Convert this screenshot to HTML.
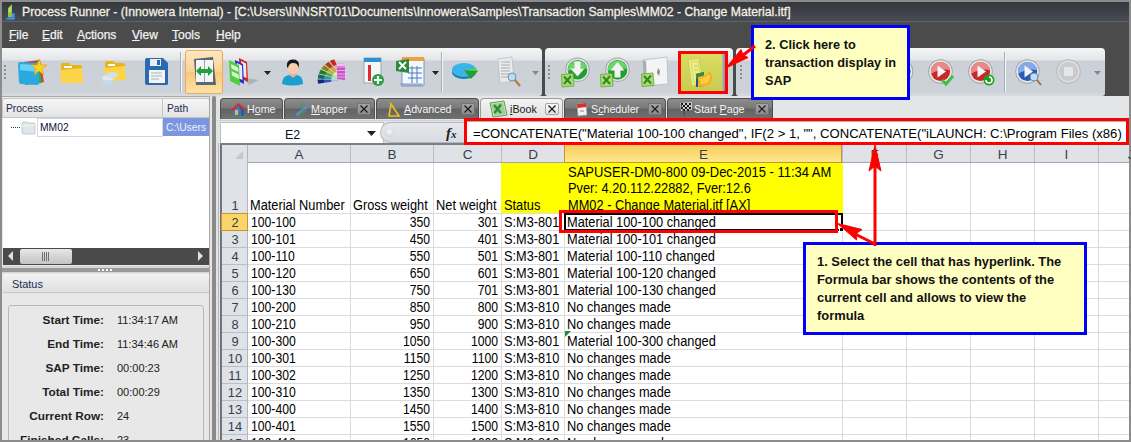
<!DOCTYPE html>
<html><head><meta charset="utf-8">
<style>
*{box-sizing:border-box;margin:0;padding:0}
html,body{width:1131px;height:442px;overflow:hidden;background:#8c8c8c;font-family:"Liberation Sans",sans-serif}
.a{position:absolute}
.t{position:absolute;white-space:pre;line-height:1}
svg{position:absolute;overflow:visible}
</style></head><body>

<div class="a" style="left:0px;top:0px;width:1131px;height:442px;background:#8c8c8c"></div>
<div class="a" style="left:2px;top:2px;width:1127px;height:19px;background:linear-gradient(#34373c,#474b53)"></div>
<div class="a" style="left:2px;top:21px;width:1127px;height:1px;background:#5d626b"></div>
<div class="t" style="left:22px;top:6px;font-size:12.25px;color:#f4f0e0;-webkit-text-stroke:0.3px #f4f0e0">Process Runner - (Innowera Internal) - [C:\Users\INNSRT01\Documents\Innowera\Samples\Transaction Samples\MM02 - Change Material.itf]</div>
<svg style="left:0;top:0" width="20" height="22"><path d="M8 8 L12 4 L12 17 L8 18Z" fill="#8cc63e"/><path d="M8.5 9 L11.5 6 L11.5 11 L8.5 13Z" fill="#b8e070"/><path d="M5 20 L8 17 L12 17 L12 13 L15 13 L15 20Z" fill="#2a64b0"/><path d="M12 13.5 L14.5 13.5 L14.5 19.5 L6 19.5 L8 17.5 L12 17.5Z" fill="#4a8ad8"/></svg>
<div class="a" style="left:2px;top:22px;width:1127px;height:26px;background:#4b4b4b"></div>
<div class="t" style="left:9px;top:29px;font-size:12px;color:#f2f2f2;-webkit-text-stroke:0.25px #f2f2f2"><u>F</u>ile</div>
<div class="t" style="left:42px;top:29px;font-size:12px;color:#f2f2f2;-webkit-text-stroke:0.25px #f2f2f2"><u>E</u>dit</div>
<div class="t" style="left:77px;top:29px;font-size:12px;color:#f2f2f2;-webkit-text-stroke:0.25px #f2f2f2"><u>A</u>ctions</div>
<div class="t" style="left:132px;top:29px;font-size:12px;color:#f2f2f2;-webkit-text-stroke:0.25px #f2f2f2"><u>V</u>iew</div>
<div class="t" style="left:172px;top:29px;font-size:12px;color:#f2f2f2;-webkit-text-stroke:0.25px #f2f2f2"><u>T</u>ools</div>
<div class="t" style="left:216px;top:29px;font-size:12px;color:#f2f2f2;-webkit-text-stroke:0.25px #f2f2f2"><u>H</u>elp</div>
<div class="a" style="left:2px;top:48px;width:1127px;height:50px;background:#4b4b4b"></div>
<div class="a" style="left:2px;top:96px;width:1127px;height:3px;background:#dcdcdc"></div>
<div class="a" style="left:2px;top:48px;width:540px;height:48px;border-radius:0 4px 3px 0;background:linear-gradient(#f5f6f7 0,#e3e5e8 12px,#cbd1d7 13px,#cdd2d8 44px,#d6dadf 47px)"></div>
<div class="a" style="left:545px;top:48px;width:188px;height:48px;border-radius:4px 4px 3px 3px;background:linear-gradient(#f5f6f7 0,#e3e5e8 12px,#cbd1d7 13px,#cdd2d8 44px,#d6dadf 47px)"></div>
<div class="a" style="left:736px;top:48px;width:369px;height:48px;border-radius:4px 4px 3px 3px;background:linear-gradient(#f5f6f7 0,#e3e5e8 12px,#cbd1d7 13px,#cdd2d8 44px,#d6dadf 47px)"></div>
<div class="a" style="left:2px;top:99px;width:208px;height:341px;background:#e6e6e6"></div>
<div class="a" style="left:2px;top:96px;width:208px;height:2px;background:linear-gradient(#a8a8a8 50%,#ececec 50%)"></div>
<div class="a" style="left:2px;top:98px;width:208px;height:20px;background:linear-gradient(#f6f6f6,#e4e4e4);border:1px solid #c4c4c4;border-radius:3px 3px 0 0"></div>
<div class="t" style="left:6px;top:104px;font-size:10.3px;color:#1e2a50;">Process</div>
<div class="a" style="left:162px;top:99px;width:1px;height:19px;background:#c6c6c6"></div>
<div class="t" style="left:167px;top:104px;font-size:10.3px;color:#1e2a50;">Path</div>
<div class="a" style="left:3px;top:118px;width:206px;height:130px;background:#fff"></div>
<div class="a" style="left:37px;top:118px;width:126px;height:19px;border:1px solid #d2d8e6"></div>
<div class="t" style="left:40px;top:123px;font-size:10.3px;color:#101040;">MM02</div>
<div class="a" style="left:163px;top:118px;width:46px;height:18px;background:#7b96dc"></div>
<svg style="left:10px;top:121px" width="28" height="14"><path d="M1 6.5H10" stroke="#333" stroke-width="1" stroke-dasharray="1 1"/><path d="M12 2 Q12 1 13 1 L17 1 L18 2 L24 2 Q25 2 25 3 L25 12 Q25 13 24 13 L13 13 Q12 13 12 12Z" fill="#dfe6ea" stroke="#b8c2c8" stroke-width="0.8"/><path d="M12 5 L25 4" stroke="#f4f8fa" stroke-width="1"/></svg>
<div class="t" style="left:166px;top:123px;font-size:10.3px;color:#f0f4ff;">C:\Users</div>
<div class="a" style="left:3px;top:248px;width:206px;height:17px;background:#4a4a4a"></div>
<div class="a" style="left:20px;top:249px;width:52px;height:15px;border-radius:2px;background:linear-gradient(#e8e8e8,#d4d4d4 50%,#c4c4c4)"></div>
<div class="a" style="left:2px;top:266px;width:208px;height:7px;background:#d6d6d6"></div>
<div class="a" style="left:2px;top:268px;width:208px;height:4px;background:#9a9a9a"></div>
<svg style="left:7px;top:250px" width="8" height="12"><path d="M6 1 L1 6 L6 11Z" fill="#e0e0e0"/></svg>
<svg style="left:197px;top:250px" width="8" height="12"><path d="M1 1 L6 6 L1 11Z" fill="#e0e0e0"/></svg>
<svg style="left:42px;top:252px" width="8" height="9"><path d="M0.5 0V9M2.5 0V9M4.5 0V9M6.5 0V9" stroke="#555" stroke-width="0.8"/></svg>
<svg style="left:98px;top:268px" width="14" height="4"><path d="M0 2H14" stroke="#fff" stroke-width="2" stroke-dasharray="2 2"/></svg>
<div class="a" style="left:3px;top:274px;width:206px;height:19px;background:linear-gradient(#f2f2f2,#e0e0e0);border-bottom:1px solid #c8c8c8"></div>
<div class="t" style="left:12px;top:279px;font-size:10.9px;color:#1e2a50;">Status</div>
<div class="a" style="left:3px;top:294px;width:206px;height:146px;background:#e8e8e8"></div>
<div class="a" style="left:8px;top:305px;width:196px;height:140px;border:1px solid #b8b8b8;border-radius:3px"></div>
<div class="a" style="left:209px;top:96px;width:1px;height:344px;background:#a8a8a8"></div>
<div class="a" style="left:210px;top:96px;width:2px;height:344px;background:#e6e6e6"></div>
<div class="a" style="left:212px;top:96px;width:4px;height:344px;background:#8a8a8a;border-radius:2px 2px 0 0"></div>
<div class="a" style="left:216px;top:96px;width:3px;height:344px;background:#e2e2e2"></div>
<div class="a" style="left:218px;top:143px;width:1px;height:297px;background:#b8b8b8"></div>
<div class="a" style="left:219px;top:96px;width:910px;height:344px;background:#e4e5e7"></div>
<div class="a" style="left:222px;top:163px;width:907px;height:277px;background:#fff"></div>
<div class="a" style="left:222px;top:145px;width:907px;height:17px;background:#dfe3e8"></div>
<div class="a" style="left:222px;top:162px;width:907px;height:1px;background:#9ea7b2"></div>
<div class="a" style="left:222px;top:162px;width:25px;height:278px;background:#dfe3e8"></div>
<div class="a" style="left:247px;top:213px;width:882px;height:1px;background:#dadcdd"></div>
<div class="a" style="left:222px;top:213px;width:25px;height:1px;background:#b8bfc8"></div>
<div class="a" style="left:247px;top:230px;width:882px;height:1px;background:#dadcdd"></div>
<div class="a" style="left:222px;top:230px;width:25px;height:1px;background:#b8bfc8"></div>
<div class="a" style="left:247px;top:247px;width:882px;height:1px;background:#dadcdd"></div>
<div class="a" style="left:222px;top:247px;width:25px;height:1px;background:#b8bfc8"></div>
<div class="a" style="left:247px;top:264px;width:882px;height:1px;background:#dadcdd"></div>
<div class="a" style="left:222px;top:264px;width:25px;height:1px;background:#b8bfc8"></div>
<div class="a" style="left:247px;top:281px;width:882px;height:1px;background:#dadcdd"></div>
<div class="a" style="left:222px;top:281px;width:25px;height:1px;background:#b8bfc8"></div>
<div class="a" style="left:247px;top:298px;width:882px;height:1px;background:#dadcdd"></div>
<div class="a" style="left:222px;top:298px;width:25px;height:1px;background:#b8bfc8"></div>
<div class="a" style="left:247px;top:315px;width:882px;height:1px;background:#dadcdd"></div>
<div class="a" style="left:222px;top:315px;width:25px;height:1px;background:#b8bfc8"></div>
<div class="a" style="left:247px;top:332px;width:882px;height:1px;background:#dadcdd"></div>
<div class="a" style="left:222px;top:332px;width:25px;height:1px;background:#b8bfc8"></div>
<div class="a" style="left:247px;top:349px;width:882px;height:1px;background:#dadcdd"></div>
<div class="a" style="left:222px;top:349px;width:25px;height:1px;background:#b8bfc8"></div>
<div class="a" style="left:247px;top:366px;width:882px;height:1px;background:#dadcdd"></div>
<div class="a" style="left:222px;top:366px;width:25px;height:1px;background:#b8bfc8"></div>
<div class="a" style="left:247px;top:383px;width:882px;height:1px;background:#dadcdd"></div>
<div class="a" style="left:222px;top:383px;width:25px;height:1px;background:#b8bfc8"></div>
<div class="a" style="left:247px;top:400px;width:882px;height:1px;background:#dadcdd"></div>
<div class="a" style="left:222px;top:400px;width:25px;height:1px;background:#b8bfc8"></div>
<div class="a" style="left:247px;top:417px;width:882px;height:1px;background:#dadcdd"></div>
<div class="a" style="left:222px;top:417px;width:25px;height:1px;background:#b8bfc8"></div>
<div class="a" style="left:247px;top:434px;width:882px;height:1px;background:#dadcdd"></div>
<div class="a" style="left:222px;top:434px;width:25px;height:1px;background:#b8bfc8"></div>
<div class="a" style="left:350px;top:163px;width:1px;height:277px;background:#dadcdd"></div>
<div class="a" style="left:350px;top:145px;width:1px;height:17px;background:#b8bfc8"></div>
<div class="a" style="left:433px;top:163px;width:1px;height:277px;background:#dadcdd"></div>
<div class="a" style="left:433px;top:145px;width:1px;height:17px;background:#b8bfc8"></div>
<div class="a" style="left:501px;top:163px;width:1px;height:277px;background:#dadcdd"></div>
<div class="a" style="left:501px;top:145px;width:1px;height:17px;background:#b8bfc8"></div>
<div class="a" style="left:564px;top:163px;width:1px;height:277px;background:#dadcdd"></div>
<div class="a" style="left:564px;top:145px;width:1px;height:17px;background:#b8bfc8"></div>
<div class="a" style="left:842px;top:163px;width:1px;height:277px;background:#dadcdd"></div>
<div class="a" style="left:842px;top:145px;width:1px;height:17px;background:#b8bfc8"></div>
<div class="a" style="left:906px;top:163px;width:1px;height:277px;background:#dadcdd"></div>
<div class="a" style="left:906px;top:145px;width:1px;height:17px;background:#b8bfc8"></div>
<div class="a" style="left:970px;top:163px;width:1px;height:277px;background:#dadcdd"></div>
<div class="a" style="left:970px;top:145px;width:1px;height:17px;background:#b8bfc8"></div>
<div class="a" style="left:1034px;top:163px;width:1px;height:277px;background:#dadcdd"></div>
<div class="a" style="left:1034px;top:145px;width:1px;height:17px;background:#b8bfc8"></div>
<div class="a" style="left:1098px;top:163px;width:1px;height:277px;background:#dadcdd"></div>
<div class="a" style="left:1098px;top:145px;width:1px;height:17px;background:#b8bfc8"></div>
<div class="a" style="left:247px;top:145px;width:1px;height:295px;background:#b0b8c2"></div>
<div class="a" style="left:501px;top:163px;width:342px;height:50px;background:#ffff00"></div>
<div class="a" style="left:220px;top:143px;width:2px;height:297px;background:#6e747c"></div>
<div class="a" style="left:220px;top:143px;width:909px;height:2px;background:#7a8088"></div>
<svg style="left:234px;top:150px" width="10" height="10"><path d="M9 1 L9 9 L1 9Z" fill="#c2c8d0"/></svg>
<div class="a" style="left:564px;top:145px;width:278px;height:18px;background:linear-gradient(#f8cb5c,#fde98e);border-left:1px solid #c8922c;border-right:1px solid #c8922c;border-bottom:1px solid #c8922c"></div>
<div class="a" style="left:221px;top:213px;width:27px;height:18px;background:#f9d56a;border:1px solid #c8922c"></div>
<div class="t" style="left:199.0px;width:200px;text-align:center;top:147.57px;font-size:13.5px;color:#3a3f48;transform:scaleX(1.0);transform-origin:50% 0">A</div>
<div class="t" style="left:292.0px;width:200px;text-align:center;top:147.57px;font-size:13.5px;color:#3a3f48;transform:scaleX(1.0);transform-origin:50% 0">B</div>
<div class="t" style="left:367.5px;width:200px;text-align:center;top:147.57px;font-size:13.5px;color:#3a3f48;transform:scaleX(1.0);transform-origin:50% 0">C</div>
<div class="t" style="left:433.0px;width:200px;text-align:center;top:147.57px;font-size:13.5px;color:#3a3f48;transform:scaleX(1.0);transform-origin:50% 0">D</div>
<div class="t" style="left:603.5px;width:200px;text-align:center;top:147.57px;font-size:13.5px;color:#3a3f48;transform:scaleX(1.0);transform-origin:50% 0">E</div>
<div class="t" style="left:774.5px;width:200px;text-align:center;top:147.57px;font-size:13.5px;color:#3a3f48;transform:scaleX(1.0);transform-origin:50% 0">F</div>
<div class="t" style="left:838.5px;width:200px;text-align:center;top:147.57px;font-size:13.5px;color:#3a3f48;transform:scaleX(1.0);transform-origin:50% 0">G</div>
<div class="t" style="left:902.5px;width:200px;text-align:center;top:147.57px;font-size:13.5px;color:#3a3f48;transform:scaleX(1.0);transform-origin:50% 0">H</div>
<div class="t" style="left:966.5px;width:200px;text-align:center;top:147.57px;font-size:13.5px;color:#3a3f48;transform:scaleX(1.0);transform-origin:50% 0">I</div>
<div class="t" style="left:1031px;width:200px;text-align:center;top:147.57px;font-size:13.5px;color:#3a3f48;transform:scaleX(1.0);transform-origin:50% 0">J</div>
<div class="t" style="left:134.5px;width:200px;text-align:center;top:198.57px;font-size:13.5px;color:#383d48;transform:scaleX(0.95);transform-origin:50% 0">1</div>
<div class="t" style="left:134.5px;width:200px;text-align:center;top:215.57px;font-size:13.5px;color:#383d48;transform:scaleX(0.95);transform-origin:50% 0">2</div>
<div class="t" style="left:134.5px;width:200px;text-align:center;top:232.57px;font-size:13.5px;color:#383d48;transform:scaleX(0.95);transform-origin:50% 0">3</div>
<div class="t" style="left:134.5px;width:200px;text-align:center;top:249.57px;font-size:13.5px;color:#383d48;transform:scaleX(0.95);transform-origin:50% 0">4</div>
<div class="t" style="left:134.5px;width:200px;text-align:center;top:266.57px;font-size:13.5px;color:#383d48;transform:scaleX(0.95);transform-origin:50% 0">5</div>
<div class="t" style="left:134.5px;width:200px;text-align:center;top:283.57px;font-size:13.5px;color:#383d48;transform:scaleX(0.95);transform-origin:50% 0">6</div>
<div class="t" style="left:134.5px;width:200px;text-align:center;top:300.57px;font-size:13.5px;color:#383d48;transform:scaleX(0.95);transform-origin:50% 0">7</div>
<div class="t" style="left:134.5px;width:200px;text-align:center;top:317.57px;font-size:13.5px;color:#383d48;transform:scaleX(0.95);transform-origin:50% 0">8</div>
<div class="t" style="left:134.5px;width:200px;text-align:center;top:334.57px;font-size:13.5px;color:#383d48;transform:scaleX(0.95);transform-origin:50% 0">9</div>
<div class="t" style="left:134.5px;width:200px;text-align:center;top:351.57px;font-size:13.5px;color:#383d48;transform:scaleX(0.95);transform-origin:50% 0">10</div>
<div class="t" style="left:134.5px;width:200px;text-align:center;top:368.57px;font-size:13.5px;color:#383d48;transform:scaleX(0.95);transform-origin:50% 0">11</div>
<div class="t" style="left:134.5px;width:200px;text-align:center;top:385.57px;font-size:13.5px;color:#383d48;transform:scaleX(0.95);transform-origin:50% 0">12</div>
<div class="t" style="left:134.5px;width:200px;text-align:center;top:402.57px;font-size:13.5px;color:#383d48;transform:scaleX(0.95);transform-origin:50% 0">13</div>
<div class="t" style="left:134.5px;width:200px;text-align:center;top:419.57px;font-size:13.5px;color:#383d48;transform:scaleX(0.95);transform-origin:50% 0">14</div>
<div class="t" style="left:134.5px;width:200px;text-align:center;top:436.57px;font-size:13.5px;color:#383d48;transform:scaleX(0.95);transform-origin:50% 0">15</div>
<div class="t" style="left:250px;top:198.15px;font-size:14px;color:#000;transform:scaleX(0.915);transform-origin:0 0">Material Number</div>
<div class="t" style="left:353px;top:198.15px;font-size:14px;color:#000;transform:scaleX(0.915);transform-origin:0 0">Gross weight</div>
<div class="t" style="left:436px;top:198.15px;font-size:14px;color:#000;transform:scaleX(0.915);transform-origin:0 0">Net weight</div>
<div class="t" style="left:504px;top:198.15px;font-size:14px;color:#000;transform:scaleX(0.915);transform-origin:0 0">Status</div>
<div class="t" style="left:567.5px;top:164.55px;font-size:14px;color:#000;transform:scaleX(0.925);transform-origin:0 0">SAPUSER-DM0-800 09-Dec-2015 - 11:34 AM</div>
<div class="t" style="left:567.5px;top:181.15px;font-size:14px;color:#000;transform:scaleX(0.915);transform-origin:0 0">Pver: 4.20.112.22882, Fver:12.6</div>
<div class="t" style="left:567.5px;top:197.95px;font-size:14px;color:#000;transform:scaleX(0.915);transform-origin:0 0">MM02 - Change Material.itf [AX]</div>
<div class="t" style="left:250.5px;top:215.15px;font-size:14px;color:#000;transform:scaleX(0.87);transform-origin:0 0">100-100</div>
<div class="t" style="left:30px;width:400px;text-align:right;top:215.15px;font-size:14px;color:#000;transform:scaleX(0.87);transform-origin:100% 0">350</div>
<div class="t" style="left:98px;width:400px;text-align:right;top:215.15px;font-size:14px;color:#000;transform:scaleX(0.87);transform-origin:100% 0">301</div>
<div class="t" style="left:504px;top:215.15px;font-size:14px;color:#000;transform:scaleX(0.91);transform-origin:0 0">S:M3-801</div>
<div class="t" style="left:566.8px;top:215.15px;font-size:14px;color:#000;transform:scaleX(0.915);transform-origin:0 0">Material 100-100 changed</div>
<div class="t" style="left:250.5px;top:232.15px;font-size:14px;color:#000;transform:scaleX(0.87);transform-origin:0 0">100-101</div>
<div class="t" style="left:30px;width:400px;text-align:right;top:232.15px;font-size:14px;color:#000;transform:scaleX(0.87);transform-origin:100% 0">450</div>
<div class="t" style="left:98px;width:400px;text-align:right;top:232.15px;font-size:14px;color:#000;transform:scaleX(0.87);transform-origin:100% 0">401</div>
<div class="t" style="left:504px;top:232.15px;font-size:14px;color:#000;transform:scaleX(0.91);transform-origin:0 0">S:M3-801</div>
<div class="t" style="left:566.8px;top:232.15px;font-size:14px;color:#000;transform:scaleX(0.915);transform-origin:0 0">Material 100-101 changed</div>
<div class="t" style="left:250.5px;top:249.15px;font-size:14px;color:#000;transform:scaleX(0.87);transform-origin:0 0">100-110</div>
<div class="t" style="left:30px;width:400px;text-align:right;top:249.15px;font-size:14px;color:#000;transform:scaleX(0.87);transform-origin:100% 0">550</div>
<div class="t" style="left:98px;width:400px;text-align:right;top:249.15px;font-size:14px;color:#000;transform:scaleX(0.87);transform-origin:100% 0">501</div>
<div class="t" style="left:504px;top:249.15px;font-size:14px;color:#000;transform:scaleX(0.91);transform-origin:0 0">S:M3-801</div>
<div class="t" style="left:566.8px;top:249.15px;font-size:14px;color:#000;transform:scaleX(0.915);transform-origin:0 0">Material 100-110 changed</div>
<div class="t" style="left:250.5px;top:266.15px;font-size:14px;color:#000;transform:scaleX(0.87);transform-origin:0 0">100-120</div>
<div class="t" style="left:30px;width:400px;text-align:right;top:266.15px;font-size:14px;color:#000;transform:scaleX(0.87);transform-origin:100% 0">650</div>
<div class="t" style="left:98px;width:400px;text-align:right;top:266.15px;font-size:14px;color:#000;transform:scaleX(0.87);transform-origin:100% 0">601</div>
<div class="t" style="left:504px;top:266.15px;font-size:14px;color:#000;transform:scaleX(0.91);transform-origin:0 0">S:M3-801</div>
<div class="t" style="left:566.8px;top:266.15px;font-size:14px;color:#000;transform:scaleX(0.915);transform-origin:0 0">Material 100-120 changed</div>
<div class="t" style="left:250.5px;top:283.15px;font-size:14px;color:#000;transform:scaleX(0.87);transform-origin:0 0">100-130</div>
<div class="t" style="left:30px;width:400px;text-align:right;top:283.15px;font-size:14px;color:#000;transform:scaleX(0.87);transform-origin:100% 0">750</div>
<div class="t" style="left:98px;width:400px;text-align:right;top:283.15px;font-size:14px;color:#000;transform:scaleX(0.87);transform-origin:100% 0">701</div>
<div class="t" style="left:504px;top:283.15px;font-size:14px;color:#000;transform:scaleX(0.91);transform-origin:0 0">S:M3-801</div>
<div class="t" style="left:566.8px;top:283.15px;font-size:14px;color:#000;transform:scaleX(0.915);transform-origin:0 0">Material 100-130 changed</div>
<div class="t" style="left:250.5px;top:300.15px;font-size:14px;color:#000;transform:scaleX(0.87);transform-origin:0 0">100-200</div>
<div class="t" style="left:30px;width:400px;text-align:right;top:300.15px;font-size:14px;color:#000;transform:scaleX(0.87);transform-origin:100% 0">850</div>
<div class="t" style="left:98px;width:400px;text-align:right;top:300.15px;font-size:14px;color:#000;transform:scaleX(0.87);transform-origin:100% 0">800</div>
<div class="t" style="left:504px;top:300.15px;font-size:14px;color:#000;transform:scaleX(0.91);transform-origin:0 0">S:M3-810</div>
<div class="t" style="left:566.8px;top:300.15px;font-size:14px;color:#000;transform:scaleX(0.915);transform-origin:0 0">No changes made</div>
<div class="t" style="left:250.5px;top:317.15px;font-size:14px;color:#000;transform:scaleX(0.87);transform-origin:0 0">100-210</div>
<div class="t" style="left:30px;width:400px;text-align:right;top:317.15px;font-size:14px;color:#000;transform:scaleX(0.87);transform-origin:100% 0">950</div>
<div class="t" style="left:98px;width:400px;text-align:right;top:317.15px;font-size:14px;color:#000;transform:scaleX(0.87);transform-origin:100% 0">900</div>
<div class="t" style="left:504px;top:317.15px;font-size:14px;color:#000;transform:scaleX(0.91);transform-origin:0 0">S:M3-810</div>
<div class="t" style="left:566.8px;top:317.15px;font-size:14px;color:#000;transform:scaleX(0.915);transform-origin:0 0">No changes made</div>
<div class="t" style="left:250.5px;top:334.15px;font-size:14px;color:#000;transform:scaleX(0.87);transform-origin:0 0">100-300</div>
<div class="t" style="left:30px;width:400px;text-align:right;top:334.15px;font-size:14px;color:#000;transform:scaleX(0.87);transform-origin:100% 0">1050</div>
<div class="t" style="left:98px;width:400px;text-align:right;top:334.15px;font-size:14px;color:#000;transform:scaleX(0.87);transform-origin:100% 0">1000</div>
<div class="t" style="left:504px;top:334.15px;font-size:14px;color:#000;transform:scaleX(0.91);transform-origin:0 0">S:M3-801</div>
<div class="t" style="left:566.8px;top:334.15px;font-size:14px;color:#000;transform:scaleX(0.915);transform-origin:0 0">Material 100-300 changed</div>
<div class="t" style="left:250.5px;top:351.15px;font-size:14px;color:#000;transform:scaleX(0.87);transform-origin:0 0">100-301</div>
<div class="t" style="left:30px;width:400px;text-align:right;top:351.15px;font-size:14px;color:#000;transform:scaleX(0.87);transform-origin:100% 0">1150</div>
<div class="t" style="left:98px;width:400px;text-align:right;top:351.15px;font-size:14px;color:#000;transform:scaleX(0.87);transform-origin:100% 0">1100</div>
<div class="t" style="left:504px;top:351.15px;font-size:14px;color:#000;transform:scaleX(0.91);transform-origin:0 0">S:M3-810</div>
<div class="t" style="left:566.8px;top:351.15px;font-size:14px;color:#000;transform:scaleX(0.915);transform-origin:0 0">No changes made</div>
<div class="t" style="left:250.5px;top:368.15px;font-size:14px;color:#000;transform:scaleX(0.87);transform-origin:0 0">100-302</div>
<div class="t" style="left:30px;width:400px;text-align:right;top:368.15px;font-size:14px;color:#000;transform:scaleX(0.87);transform-origin:100% 0">1250</div>
<div class="t" style="left:98px;width:400px;text-align:right;top:368.15px;font-size:14px;color:#000;transform:scaleX(0.87);transform-origin:100% 0">1200</div>
<div class="t" style="left:504px;top:368.15px;font-size:14px;color:#000;transform:scaleX(0.91);transform-origin:0 0">S:M3-810</div>
<div class="t" style="left:566.8px;top:368.15px;font-size:14px;color:#000;transform:scaleX(0.915);transform-origin:0 0">No changes made</div>
<div class="t" style="left:250.5px;top:385.15px;font-size:14px;color:#000;transform:scaleX(0.87);transform-origin:0 0">100-310</div>
<div class="t" style="left:30px;width:400px;text-align:right;top:385.15px;font-size:14px;color:#000;transform:scaleX(0.87);transform-origin:100% 0">1350</div>
<div class="t" style="left:98px;width:400px;text-align:right;top:385.15px;font-size:14px;color:#000;transform:scaleX(0.87);transform-origin:100% 0">1300</div>
<div class="t" style="left:504px;top:385.15px;font-size:14px;color:#000;transform:scaleX(0.91);transform-origin:0 0">S:M3-810</div>
<div class="t" style="left:566.8px;top:385.15px;font-size:14px;color:#000;transform:scaleX(0.915);transform-origin:0 0">No changes made</div>
<div class="t" style="left:250.5px;top:402.15px;font-size:14px;color:#000;transform:scaleX(0.87);transform-origin:0 0">100-400</div>
<div class="t" style="left:30px;width:400px;text-align:right;top:402.15px;font-size:14px;color:#000;transform:scaleX(0.87);transform-origin:100% 0">1450</div>
<div class="t" style="left:98px;width:400px;text-align:right;top:402.15px;font-size:14px;color:#000;transform:scaleX(0.87);transform-origin:100% 0">1400</div>
<div class="t" style="left:504px;top:402.15px;font-size:14px;color:#000;transform:scaleX(0.91);transform-origin:0 0">S:M3-810</div>
<div class="t" style="left:566.8px;top:402.15px;font-size:14px;color:#000;transform:scaleX(0.915);transform-origin:0 0">No changes made</div>
<div class="t" style="left:250.5px;top:419.15px;font-size:14px;color:#000;transform:scaleX(0.87);transform-origin:0 0">100-401</div>
<div class="t" style="left:30px;width:400px;text-align:right;top:419.15px;font-size:14px;color:#000;transform:scaleX(0.87);transform-origin:100% 0">1550</div>
<div class="t" style="left:98px;width:400px;text-align:right;top:419.15px;font-size:14px;color:#000;transform:scaleX(0.87);transform-origin:100% 0">1500</div>
<div class="t" style="left:504px;top:419.15px;font-size:14px;color:#000;transform:scaleX(0.91);transform-origin:0 0">S:M3-810</div>
<div class="t" style="left:566.8px;top:419.15px;font-size:14px;color:#000;transform:scaleX(0.915);transform-origin:0 0">No changes made</div>
<div class="t" style="left:250.5px;top:436.15px;font-size:14px;color:#000;transform:scaleX(0.87);transform-origin:0 0">100-410</div>
<div class="t" style="left:30px;width:400px;text-align:right;top:436.15px;font-size:14px;color:#000;transform:scaleX(0.87);transform-origin:100% 0">1650</div>
<div class="t" style="left:98px;width:400px;text-align:right;top:436.15px;font-size:14px;color:#000;transform:scaleX(0.87);transform-origin:100% 0">1600</div>
<div class="t" style="left:504px;top:436.15px;font-size:14px;color:#000;transform:scaleX(0.91);transform-origin:0 0">S:M3-810</div>
<div class="t" style="left:566.8px;top:436.15px;font-size:14px;color:#000;transform:scaleX(0.915);transform-origin:0 0">No changes made</div>
<svg style="left:565px;top:331px" width="7" height="7"><path d="M0 0 L6 0 L0 6Z" fill="#1f8a3a"/></svg>
<div class="a" style="left:564px;top:213px;width:279px;height:18px;border:2px solid #000"></div>
<div class="a" style="left:839px;top:227px;width:5px;height:5px;background:#000;border:1px solid #fff"></div>
<div class="a" style="left:0px;top:440px;width:1131px;height:2px;background:#8c8c8c"></div>
<div class="a" style="left:219px;top:96px;width:910px;height:24px;background:#e4e5e7"></div>
<div class="a" style="left:220px;top:98px;width:63px;height:21px;background:linear-gradient(#8c8c8c 0,#7a7a7a 9px,#626262 10px,#727272 21px);border:1px solid #4e4e4e;border-bottom:none;border-radius:4px 4px 0 0"></div>
<div class="t" style="left:247px;top:104px;font-size:10.7px;color:#f6f6f6;">H<u>o</u>me</div>
<div class="a" style="left:284px;top:98px;width:91px;height:21px;background:linear-gradient(#8c8c8c 0,#7a7a7a 9px,#626262 10px,#727272 21px);border:1px solid #4e4e4e;border-bottom:none;border-radius:4px 4px 0 0"></div>
<div class="t" style="left:311px;top:104px;font-size:10.7px;color:#f6f6f6;"><u>M</u>apper</div>
<div class="a" style="left:357px;top:103px;width:14px;height:12px;background:linear-gradient(#a4a4a4,#8c8c8c);border:1px solid #747474;border-radius:2px"></div>
<svg style="left:360px;top:105px" width="8" height="8"><path d="M0.5 0.5L7.5 7.5M7.5 0.5L0.5 7.5" stroke="#1a1a1a" stroke-width="1.15"/></svg>
<div class="a" style="left:376px;top:98px;width:103px;height:21px;background:linear-gradient(#8c8c8c 0,#7a7a7a 9px,#626262 10px,#727272 21px);border:1px solid #4e4e4e;border-bottom:none;border-radius:4px 4px 0 0"></div>
<div class="t" style="left:404px;top:104px;font-size:10.7px;color:#f6f6f6;"><u>A</u>dvanced</div>
<div class="a" style="left:461px;top:103px;width:14px;height:12px;background:linear-gradient(#a4a4a4,#8c8c8c);border:1px solid #747474;border-radius:2px"></div>
<svg style="left:464px;top:105px" width="8" height="8"><path d="M0.5 0.5L7.5 7.5M7.5 0.5L0.5 7.5" stroke="#1a1a1a" stroke-width="1.15"/></svg>
<div class="a" style="left:480px;top:98px;width:83px;height:23px;background:linear-gradient(#f4f4f4,#e6e6e6 60%,#e4e4e4);border:1px solid #9c9c9c;border-bottom:none;border-radius:4px 4px 0 0"></div>
<div class="t" style="left:510px;top:104px;font-size:10.7px;color:#1a1a1a;"><u>i</u>Book</div>
<div class="a" style="left:545px;top:103px;width:14px;height:12px;background:linear-gradient(#fafafa,#e0e0e0);border:1px solid #a8a8a8;border-radius:2px"></div>
<svg style="left:548px;top:105px" width="8" height="8"><path d="M0.5 0.5L7.5 7.5M7.5 0.5L0.5 7.5" stroke="#1a1a1a" stroke-width="1.15"/></svg>
<div class="a" style="left:564px;top:98px;width:102px;height:21px;background:linear-gradient(#8c8c8c 0,#7a7a7a 9px,#626262 10px,#727272 21px);border:1px solid #4e4e4e;border-bottom:none;border-radius:4px 4px 0 0"></div>
<div class="t" style="left:591px;top:104px;font-size:10.7px;color:#f6f6f6;">S<u>c</u>heduler</div>
<div class="a" style="left:648px;top:103px;width:14px;height:12px;background:linear-gradient(#a4a4a4,#8c8c8c);border:1px solid #747474;border-radius:2px"></div>
<svg style="left:651px;top:105px" width="8" height="8"><path d="M0.5 0.5L7.5 7.5M7.5 0.5L0.5 7.5" stroke="#1a1a1a" stroke-width="1.15"/></svg>
<div class="a" style="left:667px;top:98px;width:106px;height:21px;background:linear-gradient(#8c8c8c 0,#7a7a7a 9px,#626262 10px,#727272 21px);border:1px solid #4e4e4e;border-bottom:none;border-radius:4px 4px 0 0"></div>
<div class="t" style="left:694px;top:104px;font-size:10.7px;color:#f6f6f6;">Start <u>P</u>age</div>
<div class="a" style="left:755px;top:103px;width:14px;height:12px;background:linear-gradient(#a4a4a4,#8c8c8c);border:1px solid #747474;border-radius:2px"></div>
<svg style="left:758px;top:105px" width="8" height="8"><path d="M0.5 0.5L7.5 7.5M7.5 0.5L0.5 7.5" stroke="#1a1a1a" stroke-width="1.15"/></svg>
<svg style="left:230px;top:101px" width="17" height="17"><path d="M3 8 L3 14 L13 15 L14 9 L8 4Z" fill="#3a78c8"/><path d="M8 4 L14 9 L14 15 L11 15 L11 10Z" fill="#2a58a0"/><path d="M1 9 L8 2 L16 8 L14 9.5 L8 4.5 L3 10Z" fill="#d82828"/><rect x="5" y="9" width="3" height="5" fill="#f0b040"/><path d="M1 14 Q8 17 16 14 L16 16 L1 16Z" fill="#40a040"/></svg>
<svg style="left:294px;top:101px" width="16" height="18"><path d="M2 14 L14 5" stroke="#4a9ad8" stroke-width="2.6" opacity="0.85"/><path d="M4 15 L13 9" stroke="#888" stroke-width="0.6"/><path d="M8 1 V17" stroke="#2aa040" stroke-width="1.2" stroke-dasharray="1.5 1"/></svg>
<svg style="left:387px;top:102px" width="13" height="15"><path d="M2 14 L4 2 L12 14Z" fill="none" stroke="#e8c020" stroke-width="1.6"/></svg>
<svg style="left:488px;top:100px" width="20" height="18"><path d="M2 3 L16 1 L19 15 L5 17Z" fill="#cfe8c8" stroke="#5aa060" stroke-width="1"/><path d="M3 4 L15 2.5 L17.5 14 L6 15.5Z" fill="#9fd090"/><path d="M6 5 L13 13 M13 4.5 L6.5 13" stroke="#2e8a3a" stroke-width="2.4"/></svg>
<svg style="left:576px;top:102px" width="12" height="15"><path d="M1 2 L10 1 L11 13 L2 14Z" fill="#f2f2f2" stroke="#999" stroke-width="0.6"/><path d="M1 2 L10 1 L10.4 5 L1.4 6Z" fill="#d83030"/><path d="M4 9H8" stroke="#888" stroke-width="1"/></svg>
<svg style="left:678px;top:101px" width="16" height="16"><path d="M2 2 L14 1 L14 9 L3 10Z" fill="#ccc"/><path d="M3 2h2v2h-2zM7 2h2v2h-2zM11 2h2v2h-2zM5 4h2v2h-2zM9 4h2v2h-2zM3 6h2v2h-2zM7 6h2v2h-2zM11 6h2v2h-2zM5 8h2v2h-2zM9 8h2v2h-2z" fill="#1a1a1a"/><path d="M3 3 L7 15" stroke="#444" stroke-width="1"/></svg>
<div class="a" style="left:217px;top:120px;width:912px;height:23px;background:#e2e4e7;border-top:1px solid #d0d3d6"></div>
<div class="a" style="left:220px;top:122px;width:164px;height:21px;background:#fff;border:1px solid #b9c0c8;border-bottom:none"></div>
<div class="t" style="left:285px;top:129px;font-size:12.5px;color:#111;">E2</div>
<svg style="left:367px;top:131px" width="9" height="6"><path d="M0 0 H9 L4.5 5Z" fill="#222"/></svg>
<div class="a" style="left:380px;top:122px;width:90px;height:21px;background:linear-gradient(#e6e8eb,#d8dce0);border:1px solid #b3b8be;border-radius:11px 0 0 11px;border-right:none"></div>
<div class="a" style="left:385px;top:128px;width:9px;height:9px;border-radius:50%;background:radial-gradient(circle at 50% 40%,#fafafa,#c4c8cc)"></div>
<div class="t" style="left:446px;top:126px;font-size:15px;color:#222;font-family:'Liberation Serif',serif;font-weight:bold"><i>f</i><span style='font-size:11px'><i>x</i></span></div>
<div class="a" style="left:464px;top:118px;width:665px;height:27px;background:#fff;border:3px solid #ff0000"></div>
<div class="a" style="left:467px;top:121px;width:659px;height:1px;background:#a9b0b8"></div>
<div class="t" style="left:473px;top:127px;font-size:13.1px;color:#000;">=CONCATENATE("Material 100-100 changed", IF(2 &gt; 1, "", CONCATENATE("iLAUNCH: C:\Program Files (x86)</div>
<div class="a" style="left:559px;top:210px;width:279px;height:23px;border:3px solid #ff0000"></div>
<div class="t" style="left:10px;top:315px;width:94px;text-align:right;font-size:11.8px;font-weight:bold;color:#222">Start Time:</div>
<div class="t" style="left:117px;top:315px;font-size:11px;color:#222;">11:34:17 AM</div>
<div class="t" style="left:10px;top:339px;width:94px;text-align:right;font-size:11.8px;font-weight:bold;color:#222">End Time:</div>
<div class="t" style="left:117px;top:339px;font-size:11px;color:#222;">11:34:46 AM</div>
<div class="t" style="left:10px;top:363px;width:94px;text-align:right;font-size:11.8px;font-weight:bold;color:#222">SAP Time:</div>
<div class="t" style="left:117px;top:363px;font-size:11px;color:#222;">00:00:23</div>
<div class="t" style="left:10px;top:387px;width:94px;text-align:right;font-size:11.8px;font-weight:bold;color:#222">Total Time:</div>
<div class="t" style="left:117px;top:387px;font-size:11px;color:#222;">00:00:29</div>
<div class="t" style="left:10px;top:411px;width:94px;text-align:right;font-size:11.8px;font-weight:bold;color:#222">Current Row:</div>
<div class="t" style="left:117px;top:411px;font-size:11px;color:#222;">24</div>
<div class="t" style="left:10px;top:435px;width:94px;text-align:right;font-size:11.8px;font-weight:bold;color:#222">Finished Calls:</div>
<div class="t" style="left:117px;top:435px;font-size:11px;color:#222;">23</div>
<div class="a" style="left:0px;top:440px;width:1131px;height:2px;background:#8c8c8c"></div>
<svg style="left:4px;top:64px" width="3" height="16"><path d="M1 1V15" stroke="#8a9098" stroke-width="2" stroke-dasharray="2 2"/></svg>
<svg style="left:548px;top:64px" width="3" height="16"><path d="M1 1V15" stroke="#8a9098" stroke-width="2" stroke-dasharray="2 2"/></svg>
<svg style="left:740px;top:64px" width="3" height="16"><path d="M1 1V15" stroke="#8a9098" stroke-width="2" stroke-dasharray="2 2"/></svg>
<div class="a" style="left:180px;top:52px;width:1px;height:40px;background:#a8aeb5"></div>
<div class="a" style="left:181px;top:52px;width:1px;height:40px;background:#f4f5f6"></div>
<div class="a" style="left:441px;top:52px;width:1px;height:40px;background:#a8aeb5"></div>
<div class="a" style="left:442px;top:52px;width:1px;height:40px;background:#f4f5f6"></div>
<div class="a" style="left:1004px;top:52px;width:1px;height:40px;background:#a8aeb5"></div>
<div class="a" style="left:1005px;top:52px;width:1px;height:40px;background:#f4f5f6"></div>
<div class="a" style="left:185px;top:50px;width:38px;height:44px;border:1px solid #f0a858;border-radius:3px;background:linear-gradient(#fde7c4,#fbd391 50%,#f9c978 51%,#fde2a6)"></div>

<svg style="left:18px;top:58px" width="30" height="28">
 <path d="M6 4 L22 2 L26 24 L8 26Z" fill="#d83a2a"/><path d="M5 6 L21 4 L24 25 L7 27Z" fill="#3aaa3a"/>
 <path d="M0 6 Q0 4 2 4 L19 5 Q21 5 21 7 L21 25 Q21 27 19 27 L3 26 Q1 26 1 24Z" fill="#2aa8e0"/>
 <path d="M2 6 L19 7 L19 14 L2 12Z" fill="#6ad0f4"/>
 <path d="M21 1 L23 7 L29 7 L24 11 L26 17 L21 13 L16 17 L18 11 L13 7 L19 7Z" fill="#ffd020" stroke="#e0a000" stroke-width="0.6"/>
</svg>
<svg style="left:60px;top:61px" width="24" height="23">
 <path d="M1 4 Q1 2 3 2 L9 2 L11 4 L20 4 Q22 4 22 6 L22 20 Q22 22 20 22 L3 22 Q1 22 1 20Z" fill="#e8b418"/>
 <path d="M0 9 L22 7 L23 21 Q23 22 21 22 L3 22 Q1 22 1 20Z" fill="#fcd448"/>
 <path d="M4 6 H12" stroke="#fff" stroke-width="2"/>
</svg>
<svg style="left:101px;top:59px" width="26" height="28">
 <path d="M4 4 Q4 2 6 2 L12 2 L14 4 L22 4 Q24 4 24 6 L24 21 L6 21Z" fill="#e8b418"/>
 <path d="M3 9 L24 7 L25 21 L5 22Z" fill="#fcd448"/>
 <path d="M7 6 H14" stroke="#fff" stroke-width="2"/>
 <ellipse cx="7" cy="19" rx="6" ry="3" fill="#dde8f2"/><ellipse cx="11" cy="16" rx="6" ry="3" fill="#cfe0f0"/><ellipse cx="6" cy="24" rx="6" ry="3" fill="#c4d8ee"/>
</svg>
<svg style="left:145px;top:58px" width="24" height="28">
 <path d="M0 2 Q0 0 2 0 L18 0 L23 5 L23 26 Q23 27 21 27 L2 27 Q0 27 0 25Z" fill="#2a6ab0"/>
 <rect x="5" y="1" width="11" height="7" fill="#e8eef4"/><rect x="12" y="2" width="3" height="5" fill="#2a6ab0"/>
 <rect x="4" y="12" width="16" height="13" fill="#f4f4f4"/>
 <path d="M6 15H17M6 18H17M6 21H14" stroke="#8aa" stroke-width="0.8"/>
</svg>
<svg style="left:193px;top:57px" width="24" height="30">
 <path d="M1 2 L20 0 L23 28 L3 28Z" fill="#5a6670"/>
 <rect x="3" y="3" width="17" height="22" fill="#f2f6f6"/>
 <path d="M11.5 3V25" stroke="#9aa" stroke-width="1"/>
 <path d="M3 14 L8 9 L8 12 L15 12 L15 9 L20 14 L15 19 L15 16 L8 16 L8 19Z" fill="#22a040"/>
</svg>
<svg style="left:228px;top:56px" width="32" height="31">
 <path d="M17 22 L31 24 L21 29Z" fill="#9aa0a8" opacity="0.6"/>
 <path d="M11 2 L19 6 L20 26 L12 22Z" fill="#d02020"/><path d="M13 5 L18 7.5 L18.5 22 L13.5 20Z" fill="#f4e8e8"/>
 <path d="M7 4 L15 8 L16 28 L8 24Z" fill="#2030d0"/><path d="M9 7 L14 9.5 L14.5 24 L9.5 22Z" fill="#e8ecf8"/>
 <path d="M1 4 L11 9 L12 30 L2 25Z" fill="#50d040"/><path d="M3 8 L10 11.5 L10.5 16 L3.5 12.5Z M3.5 15 L10.5 18.5 L11 23 L4 19.5Z" fill="#e0f4d8"/>
</svg>
<svg style="left:281px;top:58px" width="24" height="28">
 <path d="M1 26 Q1 18 8 17 L12 19 L16 17 Q22 18 22 26 Q12 29 1 26Z" fill="#1aa0d0"/>
 <path d="M8 16 L12 20 L16 16 L15 14 L9 14Z" fill="#e8b090"/>
 <ellipse cx="12" cy="9.5" rx="5.2" ry="6.8" fill="#f8cca8"/>
 <path d="M6 9 Q5 2 11 1.5 Q18 1 18 7 L17.5 10 Q17 5 12 5 Q8 5 7 10Z" fill="#1a1a1a"/>
</svg>
<svg style="left:318px;top:56px" width="30" height="26"><path d="M23.8 19.3 L21.2 13.9 L19.1 14.9 L22.7 19.7Z" fill="#f8f0f0"/><path d="M21.2 13.9 L18.7 8.6 L15.4 10.0 L19.1 14.9Z" fill="#f0a0a0"/><path d="M18.7 8.6 L16.1 3.2 L11.7 5.1 L15.4 10.0Z" fill="#d02020"/><path d="M22.5 19.8 L18.6 15.1 L16.8 16.5 L21.7 20.5Z" fill="#f0e0a0"/><path d="M18.6 15.1 L14.7 10.4 L11.9 12.5 L16.8 16.5Z" fill="#d0a040"/><path d="M14.7 10.4 L10.7 5.7 L7.0 8.5 L11.9 12.5Z" fill="#a04810"/><path d="M21.5 20.6 L16.4 16.8 L15.0 18.5 L20.8 21.4Z" fill="#e8f0a0"/><path d="M16.4 16.8 L11.3 13.0 L9.1 15.5 L15.0 18.5Z" fill="#b8b830"/><path d="M11.3 13.0 L6.2 9.2 L3.3 12.6 L9.1 15.5Z" fill="#908010"/><path d="M20.7 21.6 L14.7 18.9 L13.8 20.8 L20.3 22.5Z" fill="#b0e890"/><path d="M14.7 18.9 L8.7 16.2 L7.3 19.1 L13.8 20.8Z" fill="#40b040"/><path d="M8.7 16.2 L2.7 13.5 L0.8 17.4 L7.3 19.1Z" fill="#208020"/><path d="M20.2 22.7 L13.6 21.2 L13.2 23.3 L20.0 23.7Z" fill="#a0e0e0"/><path d="M13.6 21.2 L7.0 19.8 L6.4 22.9 L13.2 23.3Z" fill="#30a0a8"/><path d="M7.0 19.8 L0.5 18.3 L-0.3 22.5 L6.4 22.9Z" fill="#106868"/><path d="M20.0 23.9 L13.2 23.7 L13.4 25.8 L20.1 24.8Z" fill="#a8b8f0"/><path d="M13.2 23.7 L6.4 23.6 L6.7 26.7 L13.4 25.8Z" fill="#3050c0"/><path d="M6.4 23.6 L-0.4 23.5 L-0.0 27.7 L6.7 26.7Z" fill="#102880"/><path d="M19 7 L27 8 L27 24 L19 23Z" fill="#c850c8"/><path d="M19 11H27M19 14.5H27M19 18H27M19 21H27" stroke="#f0b8f0" stroke-width="0.9"/><path d="M19 7 L27 8 L27 10 L19 10Z" fill="#f0c0f0"/></svg>
<svg style="left:363px;top:57px" width="22" height="30">
 <rect x="1" y="1" width="17" height="25" fill="#f4f6f8" stroke="#a0a8b0"/>
 <rect x="1" y="1" width="17" height="4" fill="#2a90d8"/>
 <rect x="5" y="8" width="3" height="16" fill="#d83030"/>
 <circle cx="15" cy="23" r="6" fill="#2aa040"/><path d="M15 19V27M11 23H19" stroke="#fff" stroke-width="2.2"/>
</svg>
<svg style="left:396px;top:56px" width="32" height="33">
 <rect x="6" y="3" width="22" height="26" fill="#f4f8fc" stroke="#7a9ac0"/>
 <rect x="6" y="1" width="22" height="4" fill="#f0a040"/>
 <path d="M4 28 H26 M5 30 H27" stroke="#7a9ac0" stroke-width="1"/>
 <path d="M12 12H26M12 17H26M12 22H26M16 10V27M21 10V27" stroke="#4a7ac0" stroke-width="1"/>
 <path d="M0 5 L13 3 L13 17 L0 15Z" fill="#2e8a3a"/>
 <path d="M3 6 L10 13 M10 6 L3 13" stroke="#fff" stroke-width="1.8"/>
</svg>
<svg style="left:451px;top:62px" width="30" height="19">
 <ellipse cx="13" cy="10" rx="12" ry="7" fill="#1a78b0"/>
 <ellipse cx="13" cy="8" rx="12" ry="7" fill="#38b4e8"/>
 <path d="M13 8 L27 9 L20 17Z" fill="#20a030"/><path d="M13 8 L25 6 L27 9Z" fill="#58d050"/>
</svg>
<svg style="left:497px;top:57px" width="26" height="30">
 <path d="M1 2 L15 0 L17 24 L3 26Z" fill="#e8eaec" stroke="#b8bcc0" stroke-width="0.7"/>
 <path d="M4 5H13M4 8H13M4 11H13M4 14H13M4 17H12M4 20H12" stroke="#9aa0a8" stroke-width="0.8"/>
 <circle cx="15" cy="20" r="4" fill="#bcdcf0" stroke="#7a8a9a"/>
 <path d="M18 23 L23 29" stroke="#b08040" stroke-width="2.2"/>
</svg>
<svg style="left:561px;top:57px" width="32" height="31">
 <circle cx="16.5" cy="12.7" r="12.2" fill="#a0a4a8"/><circle cx="16.5" cy="12.7" r="11.3" fill="#e2e4e6"/><circle cx="16.5" cy="12.7" r="9.8" fill="#1ea02e"/>
 <path d="M6.8 12 A9.8 9.8 0 0 1 26.2 12 Q16 9 6.8 14Z" fill="#6ad46a"/>
 <path d="M13.5 4.5H19.5V11.5H23.5L16.5 19.5L9.5 11.5H13.5Z" fill="#f2f2f2"/>
 <path d="M0.5 17.5 L12 16.5 L13 29 L1 30Z" fill="#a8dc70" stroke="#6aa040" stroke-width="0.8"/><path d="M3 19.5 L10 27 M10 19 L3 27" stroke="#2e8a20" stroke-width="2"/>
</svg>
<svg style="left:600px;top:57px" width="32" height="31">
 <circle cx="17.5" cy="12.7" r="12.2" fill="#a0a4a8"/><circle cx="17.5" cy="12.7" r="11.3" fill="#e2e4e6"/><circle cx="17.5" cy="12.7" r="9.8" fill="#1ea02e"/>
 <path d="M7.8 12 A9.8 9.8 0 0 1 27.2 12 Q17 9 7.8 14Z" fill="#6ad46a"/>
 <path d="M14.5 20.5H20.5V13.5H24.5L17.5 5L10.5 13.5H14.5Z" fill="#f2f2f2"/>
 <path d="M0.5 17.5 L12 16.5 L13 29 L1 30Z" fill="#a8dc70" stroke="#6aa040" stroke-width="0.8"/><path d="M3 19.5 L10 27 M10 19 L3 27" stroke="#2e8a20" stroke-width="2"/>
</svg>
<svg style="left:641px;top:57px" width="30" height="30">
 <path d="M2 3 L26 0 L27 27 L3 29Z" fill="#f4f4f4" stroke="#b8bcc0" stroke-width="0.8"/>
 <path d="M2 3 L5 4 L6 28 L3 29Z" fill="#a8acb0"/>
 <path d="M17 11 L19 14 L18 19 L16 16Z" fill="#888"/>
 <path d="M0.5 17 L12 16 L13 28.5 L1 29.5Z" fill="#a8dc70" stroke="#6aa040" stroke-width="0.8"/><path d="M3 19 L10 26.5 M10 18.5 L3 26.5" stroke="#2e8a20" stroke-width="2"/>
</svg>

<div class="a" style="left:678px;top:51px;width:50px;height:43px;background:linear-gradient(#d8dc60,#c8cc50);border:3px solid #ff0000"></div>
<div class="a" style="left:722px;top:54px;width:3px;height:37px;background:linear-gradient(90deg,#b8bcc0,#8a9098)"></div>
<svg style="left:686px;top:57px" width="30" height="32">
 <path d="M2 3 L13 1 L17 26 L6 29Z" fill="#eeee88" stroke="#c8c850" stroke-width="0.8"/>
 <path d="M5 5 L12 4 L15 24 L8 26Z" fill="none" stroke="#d0d060" stroke-width="0.8"/>
 <path d="M8 9H12M8 13H12M9 17H13" stroke="#c0c050" stroke-width="0.8"/>
 <path d="M10 17 L18 15 L18 29 L10 30Z" fill="#1a5a8a"/>
 <path d="M10 17 L18 15 L18 20 L10 22Z" fill="#3a8a40"/>
 <path d="M12 20 L20 18 Q23 15 23 14 Q27 17 26 23 Q24 29 17 29 L12 30Z" fill="#f4b020"/>
 <path d="M14 22 L19 20 Q22 19 23 17 Q25 21 22 25 Q20 27 15 27Z" fill="#fcd040"/>
</svg>
<svg style="left:928px;top:59px" width="30" height="30">
 <circle cx="12.5" cy="12.5" r="12.2" fill="#9ea3a8"/><circle cx="12.5" cy="12.5" r="11.3" fill="#e4e6e8"/><circle cx="12.5" cy="12.5" r="9.6" fill="#c82828"/>
 <path d="M3 11 A9.6 9.6 0 0 1 22 11 Q12 9 3 15Z" fill="#e88888"/>
 <path d="M9.5 6.5 L18 12.5 L9.5 18.5Z" fill="#f4f4f4"/>
 <path d="M14 21 L18 25 L25 17" stroke="#40c040" stroke-width="3" fill="none"/>
</svg>
<svg style="left:968px;top:59px" width="30" height="30">
 <circle cx="12.5" cy="12.5" r="12.2" fill="#9ea3a8"/><circle cx="12.5" cy="12.5" r="11.3" fill="#e4e6e8"/><circle cx="12.5" cy="12.5" r="9.6" fill="#c82828"/>
 <path d="M3 11 A9.6 9.6 0 0 1 22 11 Q12 9 3 15Z" fill="#e88888"/>
 <path d="M9.5 6.5 L18 12.5 L9.5 18.5Z" fill="#f4f4f4"/>
 <circle cx="21" cy="21" r="5.5" fill="#20a020"/><path d="M18 21 A3 3 0 1 0 21 18" stroke="#fff" stroke-width="1.6" fill="none"/>
</svg>
<svg style="left:1015px;top:59px" width="30" height="30">
 <circle cx="12.5" cy="12.5" r="12.2" fill="#9ea3a8"/><circle cx="12.5" cy="12.5" r="11.3" fill="#e4e6e8"/><circle cx="12.5" cy="12.5" r="9.6" fill="#2a5ab8"/>
 <path d="M3 11 A9.6 9.6 0 0 1 22 11 Q12 9 3 15Z" fill="#88a8e8"/>
 <path d="M9.5 6.5 L18 12.5 L9.5 18.5Z" fill="#f4f4f4"/>
 <circle cx="19" cy="18" r="4" fill="#bfe0f4" stroke="#6a8aa8"/><path d="M22 21 L26 26" stroke="#a07040" stroke-width="2"/>
</svg>
<svg style="left:1056px;top:59px" width="26" height="26">
 <circle cx="12.5" cy="12.5" r="12.2" fill="#b4b8bc"/><circle cx="12.5" cy="12.5" r="11.3" fill="#dcdee0"/><circle cx="12.5" cy="12.5" r="9.6" fill="#c8cacc"/>
 <rect x="8" y="8" width="9" height="9" rx="1" fill="#e4e6e8"/>
</svg>
<svg style="left:896px;top:59px" width="18" height="26"><circle cx="5" cy="12.5" r="12.2" fill="#9ea3a8"/><circle cx="5" cy="12.5" r="11.3" fill="#e4e6e8"/><circle cx="5" cy="12.5" r="9.6" fill="#2a5ab8"/></svg>
<svg style="left:264px;top:71px" width="7" height="4"><path d="M0 0H7L3.5 4Z" fill="#222"/></svg>
<svg style="left:432px;top:71px" width="7" height="4"><path d="M0 0H7L3.5 4Z" fill="#222"/></svg>
<svg style="left:532px;top:71px" width="7" height="4"><path d="M0 0H7L3.5 4Z" fill="#7a8a9c"/></svg>
<svg style="left:1094px;top:71px" width="7" height="4"><path d="M0 0H7L3.5 4Z" fill="#7a8a9c"/></svg>
<div class="a" style="left:751px;top:25px;width:159px;height:75px;background:#ffffc1;border:3px solid #0000ff"></div>
<div class="t" style="left:765px;top:38.5px;font-size:12.75px;color:#111;font-weight:bold">2. Click here to</div>
<div class="t" style="left:765px;top:56.5px;font-size:12.75px;color:#111;font-weight:bold">transaction display in</div>
<div class="t" style="left:765px;top:74.5px;font-size:12.75px;color:#111;font-weight:bold">SAP</div>
<div class="a" style="left:803px;top:242px;width:284px;height:93px;background:#ffffc1;border:3px solid #0000ff"></div>
<div class="t" style="left:817px;top:256px;font-size:12.9px;color:#111;font-weight:bold">1. Select the cell that has hyperlink. The</div>
<div class="t" style="left:817px;top:274px;font-size:12.9px;color:#111;font-weight:bold">Formula bar shows the contents of the</div>
<div class="t" style="left:817px;top:292px;font-size:12.9px;color:#111;font-weight:bold">current cell and allows to view the</div>
<div class="t" style="left:817px;top:310px;font-size:12.9px;color:#111;font-weight:bold">formula</div>
<svg style="left:0;top:0" width="1131" height="442">
<g stroke="#ff0000" stroke-width="3" fill="#ff0000">
<line x1="875" y1="246" x2="875" y2="165"/>
<path d="M875 145 L869 171 L875 166 L881 171Z" stroke-width="1"/>
<line x1="875" y1="244" x2="853" y2="233"/>
<path d="M837.5 223.5 L862 229.5 L857 233 L856.5 240Z" stroke-width="1"/>
<line x1="755" y1="46" x2="738" y2="59"/>
<path d="M726 68 L741 49.5 L743 55 L748 57.5Z" stroke-width="1"/>
</g></svg>
</body></html>
